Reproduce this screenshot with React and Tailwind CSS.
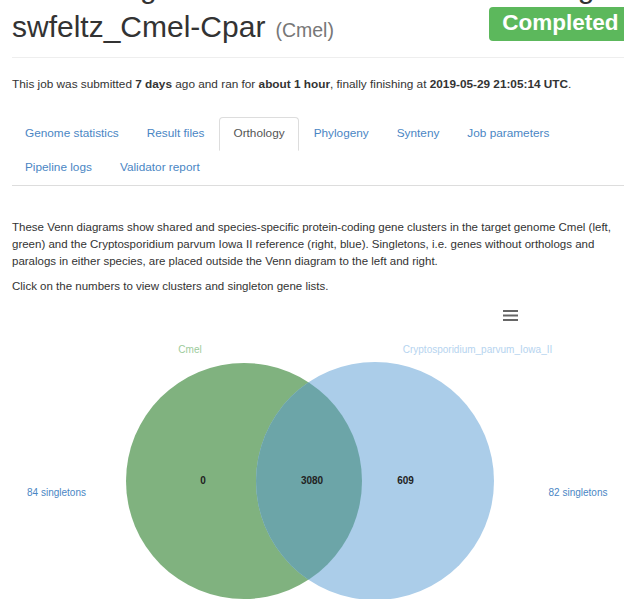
import React from "react";

const tabs = [
  ["Genome statistics", false],
  ["Result files", false],
  ["Orthology", true],
  ["Phylogeny", false],
  ["Synteny", false],
  ["Job parameters", false],
  ["Pipeline logs", false],
  ["Validator report", false],
];

const VennChart = () => (
  <svg width="644" height="310" className="block -ml-3">
    <g transform="translate(0,-296)">
      <defs>
        <clipPath id="leftSet">
          <circle cx="244" cy="482" r="118" />
        </clipPath>
      </defs>

      {/* export menu button */}
      <g stroke="#666" strokeWidth="2">
        <line x1="503" y1="312" x2="518" y2="312" />
        <line x1="503" y1="316.5" x2="518" y2="316.5" />
        <line x1="503" y1="321" x2="518" y2="321" />
      </g>

      <g fontFamily="'Liberation Sans', Arial, sans-serif" fontSize="10">
        <text x="190" y="354" textAnchor="middle" fill="#9ccb9b">Cmel</text>
        <text x="477.5" y="354" textAnchor="middle" fill="#b6d4ef">Cryptosporidium_parvum_Iowa_II</text>
      </g>

      <circle cx="244" cy="482" r="118" fill="#80b27f" />
      <circle cx="375" cy="482" r="119" fill="#abcde9" />
      <circle cx="375" cy="482" r="119" fill="#6ca5a8" clipPath="url(#leftSet)" />

      <g fontFamily="'Liberation Sans', Arial, sans-serif" fontSize="10" fontWeight="bold" fill="#222" textAnchor="middle">
        <text x="203" y="485">0</text>
        <text x="312" y="485">3080</text>
        <text x="405.5" y="485">609</text>
      </g>

      <g fontFamily="'Liberation Sans', Arial, sans-serif" fontSize="10" fill="#4a86c4" textAnchor="middle">
        <text x="56.5" y="497">84 singletons</text>
        <text x="578" y="497">82 singletons</text>
      </g>
    </g>
  </svg>
);

export default function App() {
  return (
    <div className="w-[624px] h-[599px] overflow-hidden bg-white text-[#333] font-['Liberation_Sans',Arial,sans-serif]">
      <div className="w-[644px] px-3">
        {/* tail of the heading above */}
        <div className="h-[4px] overflow-hidden">
          <div className="-mt-[29px] flex text-[30px] leading-[33px]">
            <span className="ml-[128px]">g</span>
            <span className="ml-[421px]">g</span>
          </div>
        </div>

        <div className="h-[54px] flex items-start justify-between border-b border-[#eee]">
          <h2 className="mt-[6px] text-[30px] leading-[33px] whitespace-nowrap">
            swfeltz_Cmel-Cpar
            <small className="ml-[10px] text-[19.5px] text-[#777]">(Cmel)</small>
          </h2>
          <span className="mt-[3px] bg-[#5cb85c] text-white font-bold text-[22.5px] leading-none px-[13.5px] pt-[4.5px] pb-[6.75px] rounded-[4px]">
            Completed
          </span>
        </div>

        <p className="mt-[18px] text-[11.8px] leading-[16px] whitespace-nowrap">
          This job was submitted <b>7 days</b> ago and ran for <b>about 1 hour</b>, finally finishing at{" "}
          <b>2019-05-29 21:05:14 UTC</b>.
        </p>

        <ul className="mt-[25px] flex flex-wrap border-b border-[#ddd] text-[11.8px]">
          {tabs.map(([label, active]) => (
            <li key={label} className="mr-[2px]">
              <a
                className={
                  active
                    ? "h-[34px] px-[13px] flex items-center border border-[#ddd] border-b-transparent rounded-t-[4px] bg-white text-[#555]"
                    : "h-[34px] px-[13px] flex items-center text-[#4a86c4]"
                }
              >
                {label}
              </a>
            </li>
          ))}
        </ul>

        <p className="mt-[33px] text-[11.5px] leading-[17px] whitespace-nowrap">
          These Venn diagrams show shared and species-specific protein-coding gene clusters in the target genome Cmel (left,
          <br />
          green) and the Cryptosporidium parvum Iowa II reference (right, blue). Singletons, i.e. genes without orthologs and
          <br />
          paralogs in either species, are placed outside the Venn diagram to the left and right.
        </p>
        <p className="mt-[8px] text-[11.5px] leading-[17px] whitespace-nowrap">
          Click on the numbers to view clusters and singleton gene lists.
        </p>

        <VennChart />
      </div>
    </div>
  );
}
